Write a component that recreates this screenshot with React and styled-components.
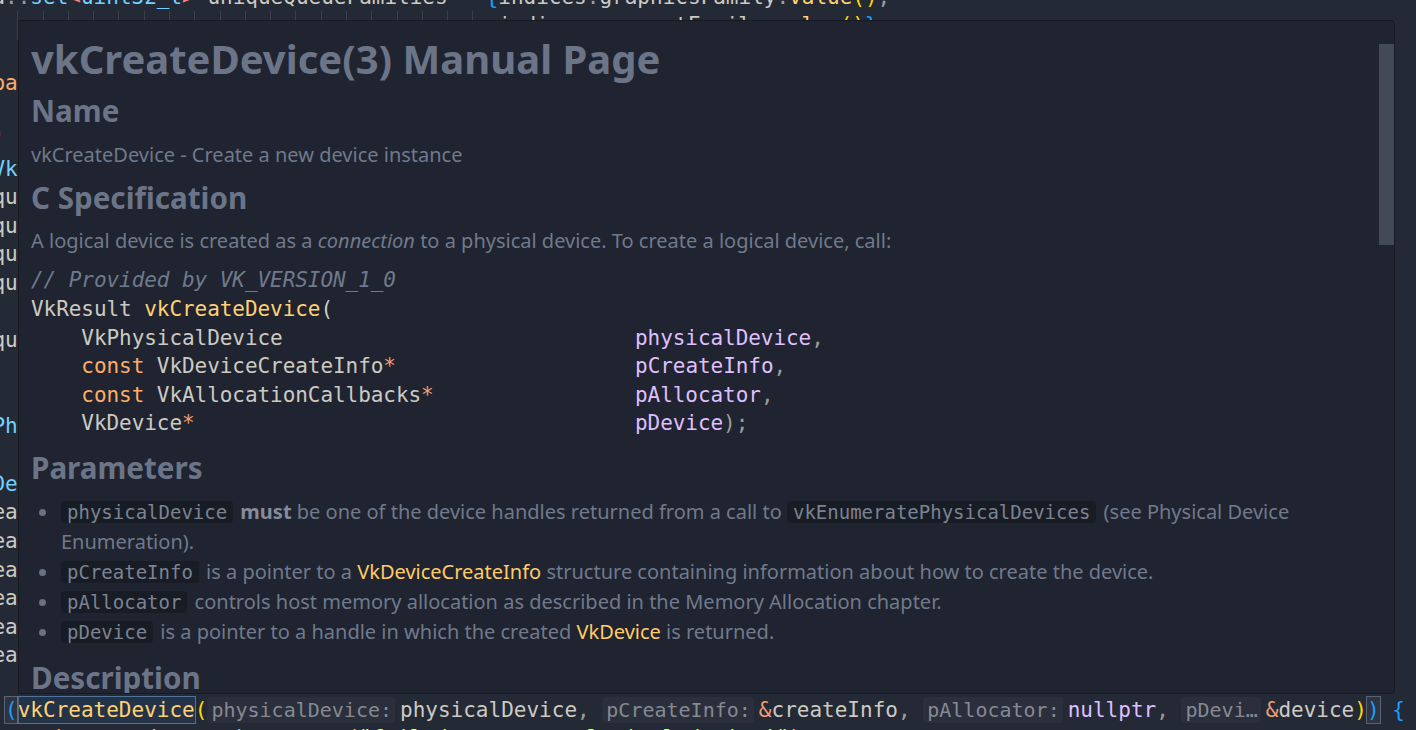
import React from "react";
import styled, { createGlobalStyle } from "styled-components";

const COLORS = {
  bg: "#242936",
  panel: "#1f2430",
  fg: "#cccac2",
  muted: "#707a8c",
  keyword: "#ffad66",
  func: "#ffd173",
  type: "#73d0ff",
  op: "#f29e74",
  tag: "#f28779",
  constant: "#dfbfff",
  accent: "#ffcc66",
  string: "#d5ff80",
  punct: "#9f9d97",
  gold: "#ffd700",
  blue: "#179fff",
  hint: "#858a94",
};

const CH = 12.643;

const GlobalStyle = createGlobalStyle`
  html, body {
    margin: 0;
    padding: 0;
    background: ${COLORS.bg};
  }
  body {
    width: 1416px;
    height: 730px;
    overflow: hidden;
  }
`;

const Screen = styled.div`
  position: relative;
  width: 1416px;
  height: 730px;
  overflow: hidden;
  background: ${COLORS.bg};
  font-family: "DejaVu Sans Mono", "Liberation Mono", monospace;
  font-size: 21px;
`;

const Editor = styled.div`
  display: flex;
  flex-direction: column;
  margin-top: -17.3px;
  margin-left: -7.6px;
`;

const Line = styled.div`
  flex: none;
  height: 28.65px;
  line-height: 28.65px;
  white-space: pre;
  color: ${COLORS.fg};
  margin-top: ${({ $shift }) => $shift || 0}px;
`;

const Tok = styled.span`
  color: ${({ $c }) => $c};
  font-style: ${({ $i }) => ($i ? "italic" : "normal")};
`;

const Guides = styled.span`
  display: inline-block;
  vertical-align: top;
  width: ${({ $cols }) => $cols * CH}px;
  height: 28.65px;
  background: repeating-linear-gradient(
    90deg,
    #3a404d 0 1px,
    transparent 1px ${CH * 2}px
  );
`;

const Hint = styled.span`
  font-size: 20px;
  color: ${COLORS.hint};
  background: #2a2f3b;
  border-radius: 3px;
  padding: 1px 3px 1px 4px;
  margin-right: 5px;
`;

const Selected = styled.span`
  color: ${COLORS.func};
  background: #243448;
  outline: 1px solid #4f7299;
  padding: 1px 0;
`;

const Matched = styled.span`
  color: ${COLORS.blue};
  background: #2e3441;
  outline: 1px solid #5b6271;
  padding: 1px 0;
`;

/* ---------- hover popup ---------- */

const Popup = styled.div`
  position: absolute;
  left: 18px;
  top: 20px;
  width: 1377px;
  height: 674px;
  box-sizing: border-box;
  background: ${COLORS.panel};
  border: 1px solid #171a21;
  border-radius: 0 4px 4px 0;
  overflow: hidden;
`;

const Content = styled.div`
  padding: 14px 44px 0 12px;
  font-family: "Noto Sans", "Open Sans", sans-serif;
  color: ${COLORS.muted};
`;

const Thumb = styled.div`
  position: absolute;
  right: 0;
  top: 23px;
  width: 15px;
  height: 201px;
  background: #434a57;
`;

const Title = styled.h1`
  margin: 0;
  font-size: 40px;
  line-height: 48px;
  font-weight: 700;
  color: #6c7588;
`;

const Heading = styled.h2`
  margin: ${({ $gap }) => $gap}px 0 0;
  font-size: 29.6px;
  line-height: 36px;
  font-weight: 700;
  color: #6c7588;
`;

const Para = styled.p`
  margin: ${({ $gap }) => $gap}px 0 0;
  font-size: 20px;
  line-height: 30px;
`;

const CodeBlock = styled.pre`
  margin: 10.2px 0 0;
  font-family: "DejaVu Sans Mono", "Liberation Mono", monospace;
  font-size: 21px;
  letter-spacing: -0.06px;
  line-height: 28.65px;
  color: ${COLORS.fg};
`;

const List = styled.ul`
  list-style: none;
  margin: 11px 0 0;
  padding: 0;
  font-size: 20px;
  line-height: 30px;
`;

const Item = styled.li`
  display: flex;
  &::before {
    content: "";
    flex: none;
    width: 7px;
    height: 7px;
    margin: 12px 15px 0 8px;
    border-radius: 50%;
    background: #697184;
  }
`;

const ItemBody = styled.div`
  flex: 1;
`;

const Chip = styled.code`
  font-family: "DejaVu Sans Mono", "Liberation Mono", monospace;
  font-size: 19px;
  color: #7b8392;
  background: #181c25;
  border-radius: 4px;
  padding: 0 6px;
  margin-right: 2px;
`;

const Strong = styled.b`
  font-weight: 700;
  color: #858c9a;
`;

const Link = styled.span`
  color: ${COLORS.accent};
`;

const editorLines = [
  [
    ["d", COLORS.fg],
    ["::", COLORS.punct],
    ["set", COLORS.type],
    ["<", COLORS.tag],
    ["uint32_t", COLORS.type],
    [">", COLORS.tag],
    [" uniqueQueueFamilies ", COLORS.fg],
    ["=", COLORS.op],
    [" ", COLORS.fg],
    ["{", COLORS.blue],
    ["indices", COLORS.fg],
    [".", COLORS.punct],
    ["graphicsFamily", COLORS.fg],
    [".", COLORS.punct],
    ["value", COLORS.func],
    ["()", COLORS.gold],
    [",", COLORS.punct],
  ],
  "guides",
  [],
  [["pa", COLORS.keyword]],
  [],
  [["'", COLORS.op]],
  [["VkDeviceQueueCreateInfo", COLORS.type]],
  [["queueCreateInfo", COLORS.fg]],
  [["queueCreateInfo", COLORS.fg]],
  [["queueCreateInfo", COLORS.fg]],
  [["queueCreateInfo", COLORS.fg]],
  [],
  [["queueCreateInfos", COLORS.fg]],
  [],
  [],
  [["PhysicalDeviceFeatures", COLORS.type]],
  [],
  [["DeviceCreateInfo", COLORS.type]],
  [["eateInfo", COLORS.fg]],
  [["eateInfo", COLORS.fg]],
  [["eateInfo", COLORS.fg]],
  [["eateInfo", COLORS.fg]],
  [["eateInfo", COLORS.fg]],
  [["eateInfo", COLORS.fg]],
  [],
];

const renderTokens = (tokens) =>
  tokens.map(([text, color, italic], i) => (
    <Tok key={i} $c={color} $i={italic}>
      {text}
    </Tok>
  ));

const codeLines = [
  [["// Provided by VK_VERSION_1_0", COLORS.muted, true]],
  [
    ["VkResult ", COLORS.fg],
    ["vkCreateDevice", COLORS.func],
    ["(", COLORS.fg],
  ],
  [
    ["    VkPhysicalDevice" + " ".repeat(28), COLORS.fg],
    ["physicalDevice", COLORS.constant],
    [",", COLORS.punct],
  ],
  [
    ["    ", COLORS.fg],
    ["const", COLORS.keyword],
    [" VkDeviceCreateInfo", COLORS.fg],
    ["*", COLORS.op],
    [" ".repeat(19), COLORS.fg],
    ["pCreateInfo", COLORS.constant],
    [",", COLORS.punct],
  ],
  [
    ["    ", COLORS.fg],
    ["const", COLORS.keyword],
    [" VkAllocationCallbacks", COLORS.fg],
    ["*", COLORS.op],
    [" ".repeat(16), COLORS.fg],
    ["pAllocator", COLORS.constant],
    [",", COLORS.punct],
  ],
  [
    ["    VkDevice", COLORS.fg],
    ["*", COLORS.op],
    [" ".repeat(35), COLORS.fg],
    ["pDevice", COLORS.constant],
    [");", COLORS.punct],
  ],
];

const App = () => {
  return (
    <>
      <GlobalStyle />
      <Screen>
        <Editor>
          {editorLines.map((tokens, idx) =>
            tokens === "guides" ? (
              <Line key={idx}>
                <Guides $cols={40} />
                <Tok $c={COLORS.fg}>indices</Tok>
                <Tok $c={COLORS.punct}>.</Tok>
                <Tok $c={COLORS.fg}>presentFamily</Tok>
                <Tok $c={COLORS.punct}>.</Tok>
                <Tok $c={COLORS.func}>value</Tok>
                <Tok $c={COLORS.gold}>()</Tok>
                <Tok $c={COLORS.blue}>{"}"}</Tok>
                <Tok $c={COLORS.punct}>;</Tok>
              </Line>
            ) : (
              <Line key={idx}>{renderTokens(tokens)}</Line>
            )
          )}
          <Line $shift={-3}>
            {" "}
            <Matched>(</Matched>
            <Selected>vkCreateDevice</Selected>
            <Tok $c={COLORS.gold}>(</Tok>
            <Hint>physicalDevice:</Hint>
            <Tok $c={COLORS.fg}>physicalDevice</Tok>
            <Tok $c={COLORS.punct}>, </Tok>
            <Hint>pCreateInfo:</Hint>
            <Tok $c={COLORS.op}>&amp;</Tok>
            <Tok $c={COLORS.fg}>createInfo</Tok>
            <Tok $c={COLORS.punct}>, </Tok>
            <Hint>pAllocator:</Hint>
            <Tok $c={COLORS.constant}>nullptr</Tok>
            <Tok $c={COLORS.punct}>, </Tok>
            <Hint>pDevi…</Hint>
            <Tok $c={COLORS.op}>&amp;</Tok>
            <Tok $c={COLORS.fg}>device</Tok>
            <Tok $c={COLORS.gold}>)</Tok>
            <Matched>)</Matched>
            <Tok $c={COLORS.blue}> {"{"}</Tok>
          </Line>
          <Line>
            {"    "}
            <Tok $c={COLORS.keyword}>throw</Tok>
            <Tok $c={COLORS.fg}> std</Tok>
            <Tok $c={COLORS.punct}>::</Tok>
            <Tok $c={COLORS.type}>runtime_error</Tok>
            <Tok $c={COLORS.gold}>(</Tok>
            <Tok $c={COLORS.string}>"failed to create logical device!"</Tok>
            <Tok $c={COLORS.gold}>)</Tok>
            <Tok $c={COLORS.punct}>;</Tok>
          </Line>
        </Editor>

        <Popup>
          <Content>
            <Title>vkCreateDevice(3) Manual Page</Title>
            <Heading $gap={10}>Name</Heading>
            <Para $gap={11}>vkCreateDevice - Create a new device instance</Para>
            <Heading $gap={10}>C Specification</Heading>
            <Para $gap={10}>
              A logical device is created as a <i>connection</i> to a physical
              device. To create a logical device, call:
            </Para>
            <CodeBlock>
              {codeLines.map((tokens, i) => (
                <div key={i}>{renderTokens(tokens)}</div>
              ))}
            </CodeBlock>
            <Heading $gap={11.4}>Parameters</Heading>
            <List>
              <Item>
                <ItemBody>
                  <Chip>physicalDevice</Chip> <Strong>must</Strong> be one of
                  the device handles returned from a call to{" "}
                  <Chip>vkEnumeratePhysicalDevices</Chip> (see Physical Device
                  Enumeration).
                </ItemBody>
              </Item>
              <Item>
                <ItemBody>
                  <Chip>pCreateInfo</Chip> is a pointer to a{" "}
                  <Link>VkDeviceCreateInfo</Link> structure containing
                  information about how to create the device.
                </ItemBody>
              </Item>
              <Item>
                <ItemBody>
                  <Chip>pAllocator</Chip> controls host memory allocation as
                  described in the Memory Allocation chapter.
                </ItemBody>
              </Item>
              <Item>
                <ItemBody>
                  <Chip>pDevice</Chip> is a pointer to a handle in which the
                  created <Link>VkDevice</Link> is returned.
                </ItemBody>
              </Item>
            </List>
            <Heading $gap={13}>Description</Heading>
          </Content>
          <Thumb />
        </Popup>
      </Screen>
    </>
  );
};

export default App;
